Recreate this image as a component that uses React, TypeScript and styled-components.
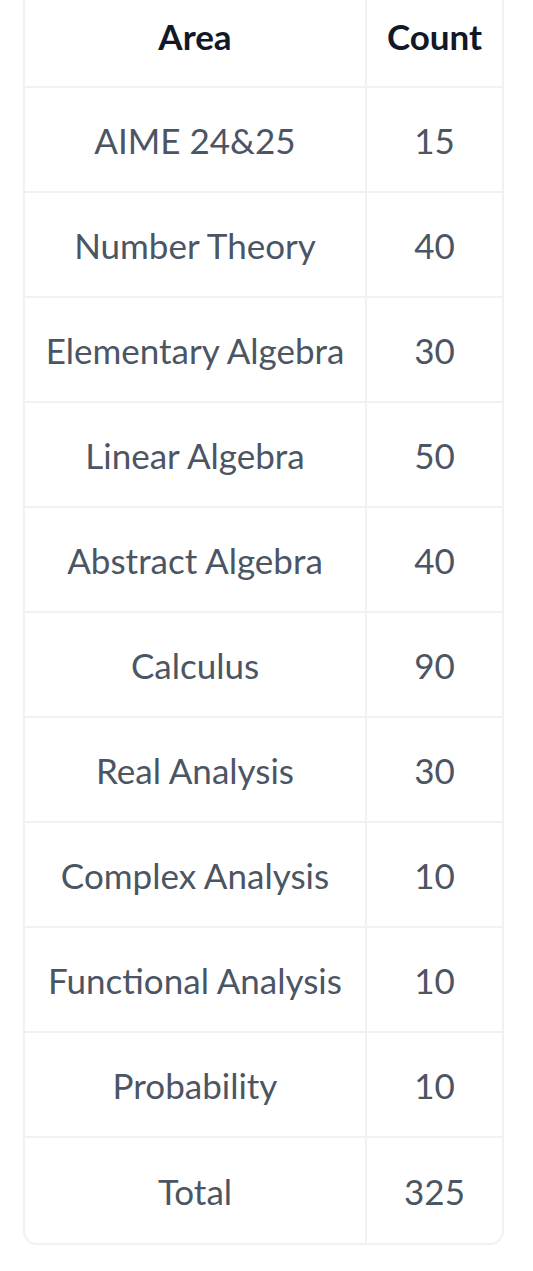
import React from "react";
import styled, { createGlobalStyle } from "styled-components";

const Global = createGlobalStyle`
  html, body { margin: 0; padding: 0; background: #ffffff; }
  body { font-family: "Lato", "Noto Sans", sans-serif; }
`;

const Page = styled.div`
  padding: 0 29px 28px 23px;
`;

const Table = styled.table`
  width: 481px;
  border-collapse: separate;
  border-spacing: 0;
  border: 2px solid #f0f1f3;
  border-top: none;
  border-radius: 0 0 14px 14px;
  font-size: 35px;
  table-layout: fixed;
`;

const HeadCell = styled.th<{ $first?: boolean }>`
  box-sizing: border-box;
  height: 88px;
  padding: 0 0 14px 0;
  text-align: center;
  vertical-align: middle;
  font-weight: 700;
  color: #111827;
  border-bottom: 2px solid #f0f1f3;
  border-right: ${(p) => (p.$first ? "2px solid #f0f1f3" : "none")};
`;

const Cell = styled.td<{ $first?: boolean; $last?: boolean }>`
  box-sizing: border-box;
  height: 105px;
  padding: 0;
  text-align: center;
  vertical-align: middle;
  color: #4b5563;
  font-weight: 400;
  border-bottom: ${(p) => (p.$last ? "none" : "2px solid #f0f1f3")};
  border-right: ${(p) => (p.$first ? "2px solid #f0f1f3" : "none")};
`;

const rows: [string, string][] = [
  ["AIME 24&25", "15"],
  ["Number Theory", "40"],
  ["Elementary Algebra", "30"],
  ["Linear Algebra", "50"],
  ["Abstract Algebra", "40"],
  ["Calculus", "90"],
  ["Real Analysis", "30"],
  ["Complex Analysis", "10"],
  ["Functional Analysis", "10"],
  ["Probability", "10"],
  ["Total", "325"],
];

export default function App() {
  return (
    <>
      <Global />
      <Page>
        <Table>
          <colgroup>
            <col style={{ width: "342px" }} />
            <col />
          </colgroup>
          <thead>
            <tr>
              <HeadCell $first>Area</HeadCell>
              <HeadCell>Count</HeadCell>
            </tr>
          </thead>
          <tbody>
            {rows.map(([a, c], i) => (
              <tr key={a}>
                <Cell $first $last={i === rows.length - 1}>
                  {a}
                </Cell>
                <Cell $last={i === rows.length - 1}>{c}</Cell>
              </tr>
            ))}
          </tbody>
        </Table>
      </Page>
    </>
  );
}
